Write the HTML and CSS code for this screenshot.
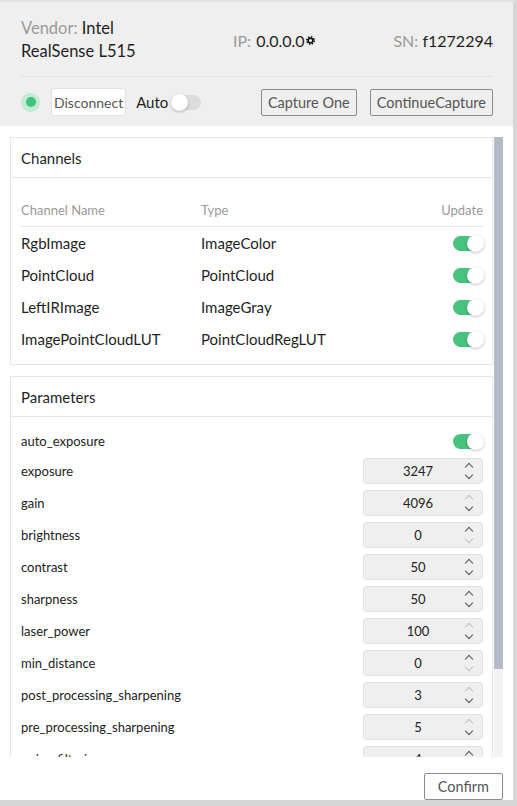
FILE: index.html
```html
<!DOCTYPE html>
<html lang="en">

<head>
    <meta charset="UTF-8">
    <meta name="viewport" content="width=device-width, initial-scale=1.0">
    <title>Camera</title>
    <link rel="stylesheet" href="styles.css">
</head>

<body>
    <div class="window">
        <div class="head">
            <div class="info">
                <div class="vendor"><span class="key">Vendor: </span>Intel<br>RealSense L515</div>
                <div class="ip"><span class="key">IP:&nbsp;</span>0.0.0.0
                    <svg class="gear" viewBox="0 0 10 10" width="9" height="9">
                        <circle cx="5" cy="5" r="3.9" fill="none" stroke="#111" stroke-width="2.2" stroke-dasharray="1.55 1.51" />
                        <circle cx="5" cy="5" r="2.6" fill="none" stroke="#111" stroke-width="1.7" />
                    </svg>
                </div>
                <div class="sn"><span class="key">SN: </span>f1272294</div>
            </div>
            <div class="tools">
                <span class="dot"></span>
                <button class="btn btn-light">Disconnect</button>
                <span class="auto">Auto</span>
                <span class="switch"></span>
                <span class="grow"></span>
                <button class="btn">Capture One</button>
                <button class="btn">ContinueCapture</button>
            </div>
        </div>

        <div class="scroll">
            <div class="scroll-view">
                <div class="card">
                    <div class="card-title">Channels</div>
                    <div class="card-body">
                        <div class="row row-head">
                            <span class="c-name">Channel Name</span>
                            <span class="c-type">Type</span>
                            <span class="c-upd">Update</span>
                        </div>
                        <div class="row">
                            <span class="c-name">RgbImage</span>
                            <span class="c-type">ImageColor</span>
                            <span class="c-upd"><span class="switch on"></span></span>
                        </div>
                        <div class="row">
                            <span class="c-name">PointCloud</span>
                            <span class="c-type">PointCloud</span>
                            <span class="c-upd"><span class="switch on"></span></span>
                        </div>
                        <div class="row">
                            <span class="c-name">LeftIRImage</span>
                            <span class="c-type">ImageGray</span>
                            <span class="c-upd"><span class="switch on"></span></span>
                        </div>
                        <div class="row">
                            <span class="c-name">ImagePointCloudLUT</span>
                            <span class="c-type">PointCloudRegLUT</span>
                            <span class="c-upd"><span class="switch on"></span></span>
                        </div>
                    </div>
                </div>

                <div class="card">
                    <div class="card-title">Parameters</div>
                    <div class="card-body params">
                        <div class="param first">
                            <span>auto_exposure</span>
                            <span class="switch on"></span>
                        </div>
                        <div class="param">
                            <span>exposure</span>
                            <div class="num"><span class="val">3247</span><span class="spin"><i class="up"></i><i class="down"></i></span></div>
                        </div>
                        <div class="param">
                            <span>gain</span>
                            <div class="num"><span class="val">4096</span><span class="spin"><i class="up off"></i><i class="down"></i></span></div>
                        </div>
                        <div class="param">
                            <span>brightness</span>
                            <div class="num"><span class="val">0</span><span class="spin"><i class="up"></i><i class="down off"></i></span></div>
                        </div>
                        <div class="param">
                            <span>contrast</span>
                            <div class="num"><span class="val">50</span><span class="spin"><i class="up"></i><i class="down"></i></span></div>
                        </div>
                        <div class="param">
                            <span>sharpness</span>
                            <div class="num"><span class="val">50</span><span class="spin"><i class="up"></i><i class="down"></i></span></div>
                        </div>
                        <div class="param">
                            <span>laser_power</span>
                            <div class="num"><span class="val">100</span><span class="spin"><i class="up off"></i><i class="down"></i></span></div>
                        </div>
                        <div class="param">
                            <span>min_distance</span>
                            <div class="num"><span class="val">0</span><span class="spin"><i class="up"></i><i class="down off"></i></span></div>
                        </div>
                        <div class="param">
                            <span>post_processing_sharpening</span>
                            <div class="num"><span class="val">3</span><span class="spin"><i class="up off"></i><i class="down"></i></span></div>
                        </div>
                        <div class="param">
                            <span>pre_processing_sharpening</span>
                            <div class="num"><span class="val">5</span><span class="spin"><i class="up off"></i><i class="down"></i></span></div>
                        </div>
                        <div class="param">
                            <span>noise_filtering</span>
                            <div class="num"><span class="val">4</span><span class="spin"><i class="up"></i><i class="down"></i></span></div>
                        </div>
                    </div>
                </div>
            </div>
            <!-- 捲軸 -->
            <div class="scrollbar"><div class="thumb"></div></div>
        </div>

        <div class="foot">
            <button class="btn btn-confirm">Confirm</button>
        </div>
    </div>
</body>

</html>
```

FILE: styles.css
```css
* {
    margin: 0;
    padding: 0;
    box-sizing: border-box;
}

body {
    font-family: "Lato", "Noto Sans", sans-serif;
    color: #1f1f1f;
    background: #fff;
}

.window {
    width: 517px;
    height: 806px;
    display: flex;
    flex-direction: column;
    border-top: 2px solid #e2e2e2;
    border-right: 4px solid #d6d6d6;
    border-bottom: 6px solid #d6d6d6;
    background: #fff;
}

/* 上方裝置資訊 */
.head {
    background: #efefef;
    padding: 15px 20px 10px 21px;
    height: 124px;
}

.info {
    display: grid;
    grid-template-columns: 212px 1fr auto;
    align-items: center;
    font-size: 16px;
    line-height: 23px;
    padding-bottom: 13px;
    border-bottom: 1px solid #e0e2ea;
}

.vendor {
    font-size: 16.5px;
}

.key {
    color: #9a9a9a;
}

.ip {
    display: flex;
    align-items: center;
    gap: 1px;
}

.tools {
    display: flex;
    align-items: center;
    margin-top: 11px;
    height: 28px;
}

.dot {
    width: 19px;
    height: 19px;
    border-radius: 50%;
    background: #c3ead3;
    display: flex;
    align-items: center;
    justify-content: center;
    margin: 0 11px 0 0;
}

.dot::after {
    content: "";
    width: 10px;
    height: 10px;
    border-radius: 50%;
    background: #3fc27d;
}

.btn {
    font-family: inherit;
    font-size: 14.5px;
    color: #555;
    background: transparent;
    border: 1px solid #8c8c8c;
    border-radius: 2px;
    height: 27px;
    padding: 0 6px;
}

.btn-light {
    font-size: 14px;
    background: #fff;
    border-color: #e2e2e2;
    border-radius: 3px;
    height: 28px;
    padding: 0 2px;
}

.auto {
    font-size: 15px;
    margin: 0 3px 0 10px;
}

.grow {
    flex: 1;
}

.tools .btn + .btn {
    margin-left: 13px;
}

/* 開關 */
.switch {
    display: inline-block;
    position: relative;
    width: 30px;
    height: 15px;
    border-radius: 8px;
    background: #dcdcdc;
}

.switch::after {
    content: "";
    position: absolute;
    top: -1px;
    left: 0;
    width: 17px;
    height: 17px;
    border-radius: 50%;
    background: #fff;
    box-shadow: 0 1px 3px rgba(0, 0, 0, 0.25);
}

.switch.on {
    background: #48c27f;
}

.switch.on::after {
    left: 14px;
}

/* 可捲動區 */
.scroll {
    margin: 11px 10px 0 10px;
    height: 620px;
    display: flex;
}

.scroll-view {
    flex: 1;
    overflow: hidden;
    padding-right: 1px;
}

.scrollbar {
    width: 9px;
    background: #f2f3f5;
}

.thumb {
    height: 532px;
    background: #b4bac8;
}

.card {
    border: 1px solid #e6e6e6;
    background: #fff;
}

.card + .card {
    margin-top: 11px;
}

.card-title {
    height: 40px;
    line-height: 40px;
    padding-left: 10px;
    font-size: 15px;
    border-bottom: 1px solid #e6e6e6;
}

.card-body {
    padding: 16px 9px 9px 10px;
}

.row {
    display: flex;
    align-items: center;
    height: 32px;
    font-size: 15px;
}

.row-head {
    font-size: 13px;
    color: #9a9a9a;
    border-bottom: 1px solid #e6e6e6;
    height: 33px;
}

.c-name {
    width: 180px;
}

.c-type {
    flex: 1;
}

.c-upd {
    display: flex;
    justify-content: flex-end;
}

/* 參數列 */
.params {
    padding-top: 10px;
    padding-bottom: 60px;
}

.param {
    display: flex;
    align-items: center;
    justify-content: space-between;
    height: 32px;
    font-size: 13px;
    color: #222;
}

.param.first {
    height: 28px;
}

.num {
    width: 120px;
    height: 26px;
    background: #efefef;
    border: 1px solid #e2e2e2;
    border-radius: 4px;
    display: flex;
    align-items: center;
}

.val {
    flex: 1;
    text-align: center;
    padding-left: 10px;
}

.spin {
    width: 14px;
    margin-right: 6px;
    display: flex;
    flex-direction: column;
    gap: 6px;
    align-items: center;
}

.spin i {
    width: 6px;
    height: 6px;
    border-left: 1px solid #555;
    border-top: 1px solid #555;
}

.spin .up {
    transform: translateY(2px) rotate(45deg);
}

.spin .down {
    transform: translateY(-2px) rotate(225deg);
}

.spin .off {
    border-color: #c4c4c4;
}

.foot {
    flex: 1;
    display: flex;
    justify-content: flex-end;
    align-items: flex-end;
    padding-right: 10px;
}

.btn-confirm {
    padding: 0 13px;
}
```
